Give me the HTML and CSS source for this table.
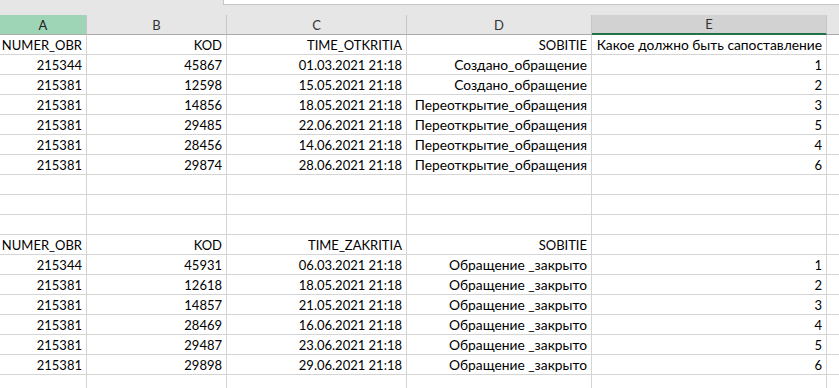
FILE: index.html
```html
<!DOCTYPE html>
<html lang="ru">
<head>
<meta charset="utf-8">
<link rel="stylesheet" href="styles.css">
</head>
<body>
<div class="topbar"><div class="formula"></div></div>
<div class="sheet">
  <div class="ch sel-a">A</div><div class="ch">B</div><div class="ch">C</div><div class="ch">D</div><div class="ch sel-e">E</div><div class="ch last"></div>

  <div class="c">NUMER_OBR</div><div class="c">KOD</div><div class="c">TIME_OTKRITIA</div><div class="c">SOBITIE</div><div class="c ru">Какое должно быть сапоставление</div><div class="c last"></div>
  <div class="c">215344</div><div class="c">45867</div><div class="c">01.03.2021 21:18</div><div class="c ru">Создано_обращение</div><div class="c">1</div><div class="c last"></div>
  <div class="c">215381</div><div class="c">12598</div><div class="c">15.05.2021 21:18</div><div class="c ru">Создано_обращение</div><div class="c">2</div><div class="c last"></div>
  <div class="c">215381</div><div class="c">14856</div><div class="c">18.05.2021 21:18</div><div class="c ru">Переоткрытие_обращения</div><div class="c">3</div><div class="c last"></div>
  <div class="c">215381</div><div class="c">29485</div><div class="c">22.06.2021 21:18</div><div class="c ru">Переоткрытие_обращения</div><div class="c">5</div><div class="c last"></div>
  <div class="c">215381</div><div class="c">28456</div><div class="c">14.06.2021 21:18</div><div class="c ru">Переоткрытие_обращения</div><div class="c">4</div><div class="c last"></div>
  <div class="c">215381</div><div class="c">29874</div><div class="c">28.06.2021 21:18</div><div class="c ru">Переоткрытие_обращения</div><div class="c">6</div><div class="c last"></div>
  <div class="c"></div><div class="c"></div><div class="c"></div><div class="c"></div><div class="c"></div><div class="c last"></div>
  <div class="c"></div><div class="c"></div><div class="c"></div><div class="c"></div><div class="c"></div><div class="c last"></div>
  <div class="c"></div><div class="c"></div><div class="c"></div><div class="c"></div><div class="c"></div><div class="c last"></div>
  <div class="c">NUMER_OBR</div><div class="c">KOD</div><div class="c">TIME_ZAKRITIA</div><div class="c">SOBITIE</div><div class="c"></div><div class="c last"></div>
  <div class="c">215344</div><div class="c">45931</div><div class="c">06.03.2021 21:18</div><div class="c ru">Обращение _закрыто</div><div class="c">1</div><div class="c last"></div>
  <div class="c">215381</div><div class="c">12618</div><div class="c">18.05.2021 21:18</div><div class="c ru">Обращение _закрыто</div><div class="c">2</div><div class="c last"></div>
  <div class="c">215381</div><div class="c">14857</div><div class="c">21.05.2021 21:18</div><div class="c ru">Обращение _закрыто</div><div class="c">3</div><div class="c last"></div>
  <div class="c">215381</div><div class="c">28469</div><div class="c">16.06.2021 21:18</div><div class="c ru">Обращение _закрыто</div><div class="c">4</div><div class="c last"></div>
  <div class="c">215381</div><div class="c">29487</div><div class="c">23.06.2021 21:18</div><div class="c ru">Обращение _закрыто</div><div class="c">5</div><div class="c last"></div>
  <div class="c">215381</div><div class="c">29898</div><div class="c">29.06.2021 21:18</div><div class="c ru">Обращение _закрыто</div><div class="c">6</div><div class="c last"></div>
  <div class="c"></div><div class="c"></div><div class="c"></div><div class="c"></div><div class="c"></div><div class="c last"></div>
</div>
</body>
</html>
```
FILE: styles.css
```css
html, body {
  margin: 0;
  padding: 0;
  background: #ffffff;
  overflow: hidden;
}
body {
  font-family: Lato, "Open Sans", sans-serif;
  font-size: 13px;
  color: #000;
}
.topbar {
  height: 15px;
  background: #e6e6e6;
  display: flex;
  justify-content: flex-end;
  align-items: flex-start;
}
.formula {
  width: 615px;
  height: 4px;
  background: #ffffff;
  border-bottom: 1px solid #c6c6c6;
  border-left: 1px solid #c6c6c6;
}
.sheet {
  display: grid;
  grid-template-columns: 87px 140px 180px 185px 235px 1fr;
  grid-auto-rows: 20px;
}
.ch {
  background: #e6e6e6;
  border-right: 1px solid #c6c6c6;
  border-bottom: 1px solid #ababab;
  text-align: center;
  line-height: 20px;
  font-size: 13px;
  color: #333;
}
.ch.sel-a {
  background: #9fd5b7;
  color: #222;
}
.ch.sel-e {
  background: #d2d2d2;
  border-bottom: 2px solid #217346;
  line-height: 19px;
}
.c {
  border-right: 1px solid #d4d4d4;
  border-bottom: 1px solid #d4d4d4;
  text-align: right;
  padding-right: 4px;
  line-height: 21px;
  white-space: nowrap;
  overflow: hidden;
}
.c.ru {
  font-size: 13.8px;
  line-height: 20px;
}
.last {
  border-right: none;
}
```
